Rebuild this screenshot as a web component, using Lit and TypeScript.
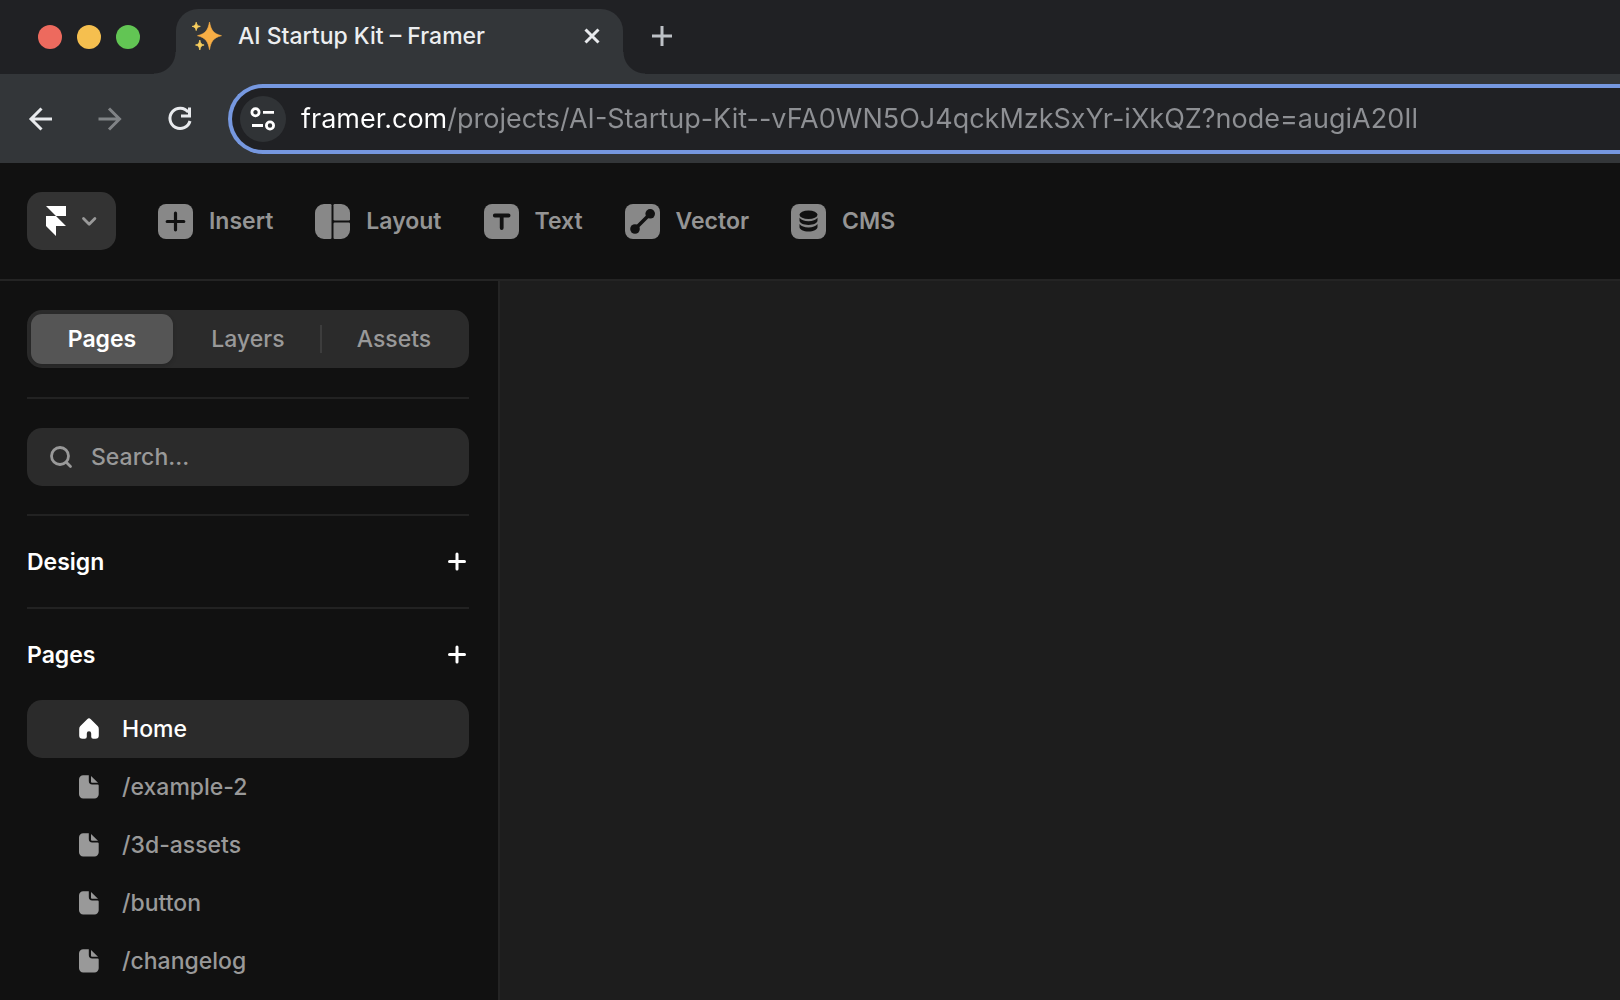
import { LitElement, html, css, svg } from "lit";
import { customElement, state } from "lit/decorators.js";

const plus = html`<svg class="plus" viewBox="0 0 24 24" aria-hidden="true">
  <path d="M12 4v15M4.5 11.500h15" fill="none" stroke="currentColor" stroke-width="3" stroke-linecap="round" />
</svg>`;

const tools = [
  {
    label: "Insert",
    icon: svg`<rect width="35" height="35" rx="8" fill="#888"/><path d="M17.5 9.2v16.6M9.2 17.5h16.6" stroke="#111" stroke-width="3.2" stroke-linecap="round"/>`,
  },
  {
    label: "Layout",
    icon: svg`<path d="M9 0h6.3a1.2 1.2 0 0 1 1.2 1.2v32.6a1.2 1.2 0 0 1-1.2 1.2H9a9 9 0 0 1-9-9V9a9 9 0 0 1 9-9Z" fill="#888"/><path d="M19.7 0H26a9 9 0 0 1 9 9v6.3a1.2 1.2 0 0 1-1.2 1.2H19.7a1.2 1.2 0 0 1-1.2-1.2V1.2A1.2 1.2 0 0 1 19.7 0Z" fill="#888"/><path d="M19.7 18.5h14.1a1.2 1.2 0 0 1 1.2 1.2V26a9 9 0 0 1-9 9h-6.3a1.2 1.2 0 0 1-1.2-1.2V19.7a1.2 1.2 0 0 1 1.2-1.2Z" fill="#888"/>`,
  },
  {
    label: "Text",
    icon: svg`<rect width="35" height="35" rx="8" fill="#888"/><path d="M10.8 11.5h13.8M17.7 11.5V24" fill="none" stroke="#111" stroke-width="3.8" stroke-linecap="round"/>`,
  },
  {
    label: "Vector",
    icon: svg`<rect width="35" height="35" rx="8" fill="#888"/><path d="M10 25 25 10" stroke="#111" stroke-width="3.6"/><circle cx="10" cy="25" r="4.8" fill="#111"/><circle cx="25.2" cy="9.8" r="4.8" fill="#111"/>`,
  },
  {
    label: "CMS",
    icon: svg`<rect width="35" height="35" rx="8" fill="#888"/><ellipse cx="17.5" cy="10.7" rx="9" ry="4.3" fill="#111"/><path d="M8.5 13.8c1.6 2.3 4.8 3.5 9 3.500s7.4-1.2 9-3.500v2.8c0 2.500-4 4.4-9 4.400s-9-1.9-9-4.400Z" fill="#111"/><path d="M8.500 20c1.6 2.3 4.8 3.500 9 3.500s7.4-1.2 9-3.500v2.9c0 2.500-4 4.500-9 4.500s-9-2-9-4.500Z" fill="#111"/>`,
  },
];

const homeIcon = html`<svg class="row-icon" viewBox="0 0 20 24" aria-hidden="true">
  <path d="M8.2 2.200a2.6 2.6 0 0 1 3.6 0L18.600 9a4 4 0 0 1 1.2 2.900V18.500a3.3 3.3 0 0 1-3.3 3.300h-2.3a2 2 0 0 1-2-2v-3.400a2.2 2.2 0 0 0-4.4 0v3.400a2 2 0 0 1-2 2H3.500A3.3 3.3 0 0 1 .2 18.500v-6.600a4 4 0 0 1 1.2-2.900Z" fill="currentColor"/>
</svg>`;

const fileIcon = html`<svg class="row-icon" viewBox="0 0 20 24" aria-hidden="true">
  <path d="M4.200 .3h5.600v5.800a3.400 3.400 0 0 0 3.400 3.400H18.700a1 1 0 0 1 1 1V19.200a4.200 4.200 0 0 1-4.200 4.200H4.200a4.200 4.200 0 0 1-4.200-4.200v-14.700a4.200 4.200 0 0 1 4.200-4.200Z" fill="currentColor"/>
  <path d="M12 1 19 7.800h-6a1 1 0 0 1-1-1Z" fill="currentColor"/>
</svg>`;

@customElement("browser-chrome")
export class BrowserChrome extends LitElement {
  static styles = css`
    :host { display: block; font-family: Inter, "Liberation Sans", sans-serif; }
    button { border: 0; padding: 0; background: none; font: inherit; color: #e8eaed; display: flex; }
    svg { display: block; flex: none; }
    .strip { display: flex; align-items: flex-end; height: 74px; background: #202124; }
    .lights { display: flex; gap: 15px; align-self: center; padding-left: 38px; }
    .light { width: 24px; height: 24px; border-radius: 50%; }
    .close { background: #ed6a5e; }
    .mini { background: #f5bf4f; }
    .zoom { background: #62c554; }
    .flare { flex: none; width: 22px; height: 22px; }
    .flare.start { margin-left: 14px; background: radial-gradient(circle at 0 0, transparent 21px, #333639 22px); }
    .flare.end { background: radial-gradient(circle at 100% 0, transparent 21px, #333639 22px); }
    .tab { display: flex; align-items: center; box-sizing: border-box; width: 447px; height: 65px; padding: 0 22px 12px 16px; border-radius: 22px 22px 0 0; background: #333639; }
    .title { flex: 1; margin-left: 16px; font-size: 23px; line-height: 32px; color: #eceef0; }
    .new { align-self: center; margin-left: 5px; color: #bdc1c6; }
    .bar { display: flex; align-items: center; height: 89px; padding-left: 26px; background: #333639; }
    .nav { display: flex; gap: 40px; margin-right: 32px; }
    .nav button:disabled { color: #808386; }
    .omni { flex: 1; min-width: 0; box-sizing: border-box; display: flex; align-items: center; gap: 15px; height: 70px; padding-left: 8px; border: 4px solid #7698e0; border-right: 0; border-radius: 35px 0 0 35px; background: #202124; }
    .site { flex: none; width: 46px; height: 46px; border-radius: 50%; background: #303336; align-items: center; justify-content: center; }
    .url { flex: 1; min-width: 0; height: 40px; padding: 0; border: 0; outline: 0; font: 400 27px/40px Inter, "Liberation Sans", sans-serif; color: #8e9094; background: linear-gradient(to right, #fff 146px, #8e9094 146px); -webkit-background-clip: text; background-clip: text; -webkit-text-fill-color: transparent; }
  `;

  render() {
    return html`
      <div class="strip">
        <div class="lights">
          <button class="light close" aria-label="Close window"></button>
          <button class="light mini" aria-label="Minimize window"></button>
          <button class="light zoom" aria-label="Zoom window"></button>
        </div>
        <div class="flare start"></div>
        <div class="tab">
          <svg width="30" height="30" viewBox="0 0 30 30" aria-hidden="true">
            <path d="M17.5 1c1.6 8 3.600 11.600 12 13.700-8.400 2.100-10.400 5.700-12 14-1.600-8.300-3.600-11.900-12-14 8.400-2.100 10.400-5.700 12-13.700Z" fill="#f8ae45" stroke="#f8ae45" stroke-width=".6"/>
            <path d="M4.2 1.200c.6 2.800 1.300 3.600 4.100 4.200-2.800.6-3.500 1.400-4.100 4.200C3.600 6.800 2.900 6 .1 5.400c2.800-.6 3.500-1.400 4.100-4.200Z" fill="#f9cf5e" stroke="#f9cf5e" stroke-width=".8"/>
            <path d="M7.800 19c.7 3.400 1.400 4.400 4.300 5-2.900.6-3.600 1.600-4.300 5-.7-3.400-1.400-4.400-4.300-5 2.900-.6 3.600-1.600 4.300-5Z" fill="#f9cf5e" stroke="#f9cf5e" stroke-width=".8"/>
          </svg>
          <span class="title">AI Startup Kit – Framer</span>
          <button aria-label="Close tab">
            <svg width="18" height="18" viewBox="0 0 18 18"><path d="m2.5 2.500 13 13M15.500 2.500l-13 13" stroke="currentColor" stroke-width="3" fill="none"/></svg>
          </button>
        </div>
        <div class="flare end"></div>
        <button class="new" aria-label="New tab">
          <svg width="24" height="24" viewBox="0 0 24 24"><path d="M12 1v20M2 11h20" stroke="currentColor" stroke-width="3" fill="none"/></svg>
        </button>
      </div>
      <div class="bar">
        <div class="nav">
          <button aria-label="Back">
            <svg width="30" height="30" viewBox="0 0 30 30"><path d="M26 15H5.500M15.500 4.500 5 15l10.500 10.500" stroke="currentColor" stroke-width="3" fill="none"/></svg>
          </button>
          <button aria-label="Forward" disabled>
            <svg width="30" height="30" viewBox="0 0 30 30"><path d="M2.500 15H23M13 4.500 23.500 15 13 25.500" stroke="currentColor" stroke-width="3" fill="none"/></svg>
          </button>
          <button aria-label="Reload">
            <svg width="30" height="30" viewBox="0 0 30 30"><path d="M22.300 8.200A10.200 10.200 0 1 0 24 17M23.500 3.500v8.500H15" stroke="currentColor" stroke-width="3" fill="none"/></svg>
          </button>
        </div>
        <div class="omni">
          <button class="site" aria-label="View site information">
            <svg width="26" height="26" viewBox="0 0 26 26"><g stroke="#fff" stroke-width="2.8" fill="none"><circle cx="5.500" cy="6.300" r="3.600"/><path d="M13 6.300h11M2 19.500h11"/><circle cx="20" cy="19.500" r="3.600"/></g></svg>
          </button>
          <input class="url" type="text" aria-label="Address" spellcheck="false" .value=${"framer.com/projects/AI-Startup-Kit--vFA0WN5OJ4qckMzkSxYr-iXkQZ?node=augiA20Il"} />
        </div>
      </div>
    `;
  }
}

@customElement("app-root")
export class AppRoot extends LitElement {
  @state() private tab = "Pages";
  @state() private page = "Home";

  static styles = css`
    :host { display: flex; flex-direction: column; height: 100vh; overflow: hidden; background: #111; color: #999; font: 500 23px/32px Inter, "Liberation Sans", sans-serif; }
    button { border: 0; padding: 0; background: none; font: inherit; color: inherit; display: flex; align-items: center; }
    svg { display: block; flex: none; }
    browser-chrome { flex: none; }
    .toolbar { flex: none; display: flex; align-items: center; gap: 42px; height: 116px; padding-left: 27px; border-bottom: 2px solid #242424; }
    .menu { height: 58px; padding: 0 19px; gap: 15px; border-radius: 15px; background: #333; }
    .tool { gap: 16px; font-weight: 600; color: #949494; }
    .body { flex: 1; min-height: 0; display: flex; }
    .side { flex: none; box-sizing: border-box; width: 500px; padding: 29px 29px 0 27px; border-right: 2px solid #242424; overflow: hidden; }
    .canvas { flex: 1; background: #1d1d1d; }
    .seg { display: grid; grid-template-columns: repeat(3, 1fr); gap: 4px; padding: 4px; border-radius: 15px; background: #2b2b2b; }
    .seg button { height: 50px; justify-content: center; border-radius: 11px; position: relative; }
    .seg .on { background: #555; color: #fff; font-weight: 600; box-shadow: 0 2px 4px rgba(0, 0, 0, 0.15); }
    .seg button:last-child::before { content: ""; position: absolute; left: -3px; top: 11px; width: 2px; height: 28px; background: #3d3d3d; }
    .rule { height: 2px; margin: 0; border: 0; background: #222; }
    .gap { margin: 29px 0; }
    .search { display: flex; align-items: center; gap: 16px; height: 58px; padding: 0 20px; border-radius: 15px; background: #2b2b2b; }
    .search input { flex: 1; min-width: 0; padding: 0; border: 0; outline: 0; background: none; font: inherit; color: #fff; }
    .search input::placeholder { color: #999; opacity: 1; }
    .under { margin-top: 28px; }
    .head { display: flex; align-items: center; justify-content: space-between; height: 91px; color: #fff; }
    .head h2 { margin: 0; font: inherit; font-weight: 600; }
    .plus { width: 24px; height: 24px; }
    .list { margin: 0; padding: 0; list-style: none; }
    .row { width: 100%; height: 58px; gap: 23px; padding: 0 52px; border-radius: 15px; }
    .row.on { background: #2b2b2b; color: #fff; }
    .row-icon { width: 20px; height: 24px; }
  `;

  render() {
    const pages = ["Home", "/example-2", "/3d-assets", "/button", "/changelog"];
    return html`
      <browser-chrome></browser-chrome>
      <header class="toolbar">
        <button class="menu" aria-label="Main menu">
          <svg width="20" height="30" viewBox="0 0 20 30"><path d="M0 0h20v10H10ZM0 10h10l10 10H10v10L0 20Z" fill="#fff"/></svg>
          <svg width="16" height="16" viewBox="0 0 16 16"><path d="m2.5 5.500 5.700 5.700 5.700-5.700" fill="none" stroke="#999" stroke-width="2.8" stroke-linecap="round" stroke-linejoin="round"/></svg>
        </button>
        ${tools.map(
          (t) => html`<button class="tool">
            <svg width="35" height="35" viewBox="0 0 35 35" aria-hidden="true">${t.icon}</svg>${t.label}
          </button>`
        )}
      </header>
      <div class="body">
        <aside class="side">
          <div class="seg">
            ${["Pages", "Layers", "Assets"].map(
              (t) => html`<button class=${t === this.tab ? "on" : ""} aria-pressed=${t === this.tab} @click=${() => (this.tab = t)}>${t}</button>`
            )}
          </div>
          <hr class="rule gap" />
          <label class="search">
            <svg width="28" height="28" viewBox="0 0 28 28" aria-hidden="true"><g fill="none" stroke="#999" stroke-width="2.8" stroke-linecap="round"><circle cx="13" cy="13" r="8.500"/><path d="m19.500 19.500 4 4"/></g></svg>
            <input type="search" placeholder="Search..." aria-label="Search" />
          </label>
          <hr class="rule under" />
          <div class="head"><h2>Design</h2><button aria-label="Add design page">${plus}</button></div>
          <hr class="rule" />
          <div class="head"><h2>Pages</h2><button aria-label="Add page">${plus}</button></div>
          <ul class="list">
            ${pages.map(
              (p) => html`<li><button class="row ${p === this.page ? "on" : ""}" @click=${() => (this.page = p)}>${p === "Home" ? homeIcon : fileIcon}${p}</button></li>`
            )}
          </ul>
        </aside>
        <main class="canvas"></main>
      </div>
    `;
  }
}
